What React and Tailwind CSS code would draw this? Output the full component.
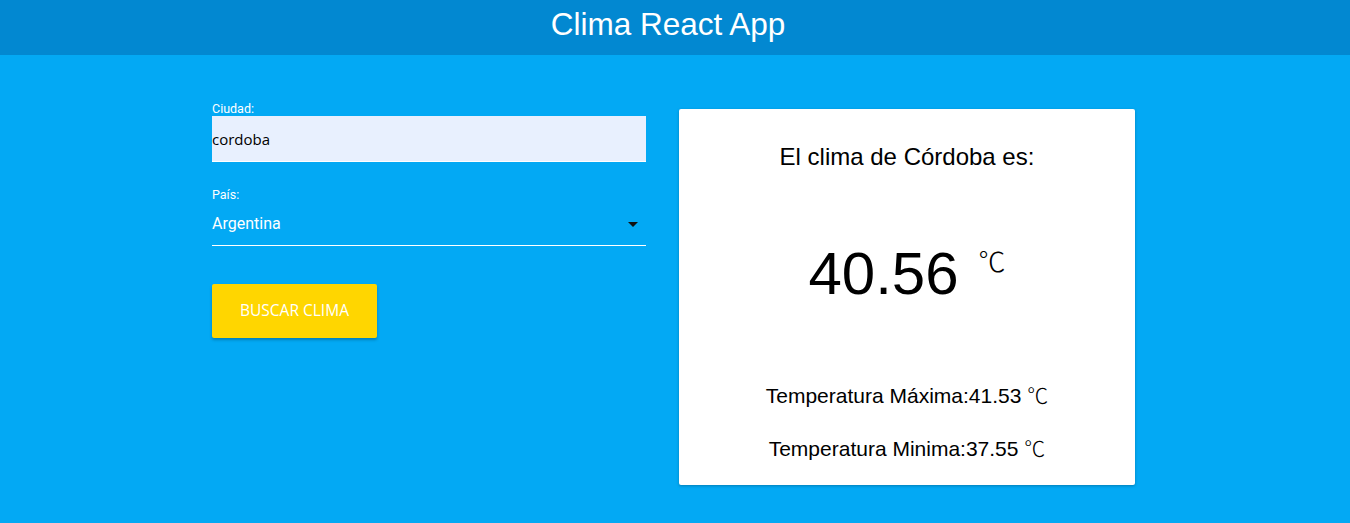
const Celsius = () => (
  <span className="font-['Noto_Sans_CJK_JP',sans-serif] font-light leading-none">℃</span>
)

const App = () => {
  return (
    <div className="min-h-screen bg-[#03a9f4] font-['Roboto',sans-serif]">
      <header className="h-[55px] bg-[#0288d1] pt-[9px] pr-[14px] text-center">
        <h1 className="text-[31.5px] leading-[31px] text-white font-['Liberation_Sans',Arial,sans-serif]">
          Clima React App
        </h1>
      </header>

      <main className="flex items-start pt-[47px] pl-[212px]">
        <form className="w-[434px]" onSubmit={e => e.preventDefault()}>
          <label className="block text-[12.5px] leading-[14px] text-white">Ciudad:</label>
          <input
            type="text"
            defaultValue="cordoba"
            className="block w-full h-[46px] bg-[#e8f0fe] border-b border-white text-[15px] text-black font-['Open_Sans',sans-serif] outline-none"
          />

          <label className="block mt-[25px] text-[12.5px] leading-[16px] text-white">País:</label>
          <div className="relative h-[43px] border-b border-white">
            <span className="block text-[16px] leading-[42px] text-white">Argentina</span>
            <svg className="absolute right-[1px] top-[9px]" width="24" height="24" viewBox="0 0 24 24">
              <path d="M7 10l5 5 5-5z" fill="#111" />
            </svg>
          </div>

          <button
            type="submit"
            className="mt-[38px] w-[165px] h-[54px] rounded-[2px] bg-[#ffd600] text-white text-[15.5px] uppercase font-['Open_Sans',sans-serif] shadow-[0_2px_3px_rgba(0,0,0,0.25)]"
          >
            Buscar Clima
          </button>
        </form>

        <div className="ml-[33px] mt-[7px] w-[456px] h-[376px] bg-white rounded-[2px] shadow-[0_1px_3px_rgba(0,0,0,0.25)] pt-[34px] text-center text-black font-['Liberation_Sans',Arial,sans-serif]">
          <p className="text-[24px] leading-[28px]">El clima de Córdoba es:</p>

          <div className="mt-[73px] flex justify-center items-start">
            <span className="text-[60px] leading-[60px]">40.56</span>
            <span className="ml-[20px] mt-[3px] text-[27px] leading-[27px] font-['Noto_Sans_CJK_JP',sans-serif] font-light">℃</span>
          </div>

          <p className="mt-[78px] h-[28px] text-[21px] leading-[28px]">
            Temperatura Máxima:41.53 <Celsius />
          </p>
          <p className="mt-[25px] h-[28px] text-[21px] leading-[28px]">
            Temperatura Minima:37.55 <Celsius />
          </p>
        </div>
      </main>
    </div>
  )
}

export default App
